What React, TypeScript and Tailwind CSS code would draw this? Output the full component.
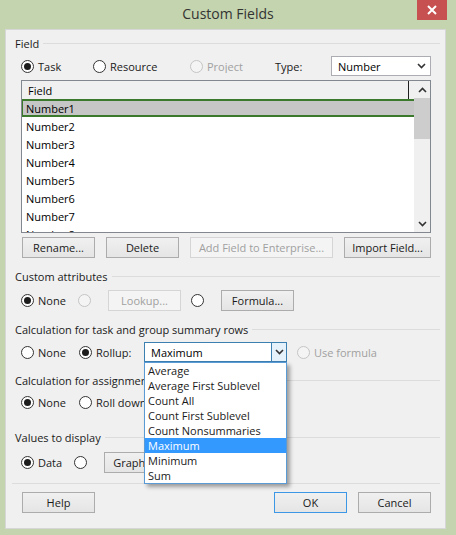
import React from 'react';

const FONT = "font-['Segoe_UI','Open_Sans',sans-serif]";

function Radio({ checked = false, disabled = false }: { checked?: boolean; disabled?: boolean }) {
  return (
    <span
      className={`flex h-[13px] w-[13px] shrink-0 items-center justify-center rounded-full border ${
        disabled ? 'border-[#c4c4c4] bg-[#f4f4f4]' : 'border-[#333333] bg-white'
      }`}
    >
      {checked && <span className="h-[7px] w-[7px] rounded-full bg-[#1c1c1c]" />}
    </span>
  );
}

function RadioLabel({ label, checked, disabled, width }: { label?: string; checked?: boolean; disabled?: boolean; width: string }) {
  return (
    <div className={`flex shrink-0 items-center gap-[4px] overflow-hidden whitespace-nowrap ${width}`}>
      <Radio checked={checked} disabled={disabled} />
      {label && <span className={disabled ? 'text-[#a0a0a0]' : 'text-[#1a1a1a]'}>{label}</span>}
    </div>
  );
}

function Btn({ label, width, disabled, primary }: { label: string; width: string; disabled?: boolean; primary?: boolean }) {
  return (
    <div
      className={`flex h-[21px] shrink-0 items-center justify-center overflow-hidden whitespace-nowrap border ${width} ${
        disabled
          ? 'border-[#d5d5d5] bg-[#f4f4f4] text-[#a0a0a0]'
          : primary
          ? 'border-[#3c97e6] bg-gradient-to-b from-[#f0f0f0] to-[#e5e5e5] text-[#1a1a1a]'
          : 'border-[#acacac] bg-gradient-to-b from-[#f0f0f0] to-[#e5e5e5] text-[#1a1a1a]'
      }`}
    >
      {label}
    </div>
  );
}

function Chevron({ className = '' }: { className?: string }) {
  return (
    <svg width="9" height="6" viewBox="0 0 9 6" className={className}>
      <polyline points="1,1 4.5,4.5 8,1" fill="none" stroke="#333" strokeWidth="1.6" />
    </svg>
  );
}

function GroupHeader({ title, mt }: { title: string; mt: string }) {
  return (
    <div className={`flex h-4 items-center gap-[4px] pl-[9px] pr-[5px] ${mt}`}>
      <span className="text-[#1a1a1a]">{title}</span>
      <div className="h-px flex-1 bg-[#dcdcdc]" />
    </div>
  );
}

const rollupOptions = [
  'Average',
  'Average First Sublevel',
  'Count All',
  'Count First Sublevel',
  'Count Nonsummaries',
  'Maximum',
  'Minimum',
  'Sum',
];

export default function App() {
  const rows = ['Number1', 'Number2', 'Number3', 'Number4', 'Number5', 'Number6', 'Number7', 'Number8'];

  return (
    <div className={`h-[535px] w-[456px] overflow-hidden bg-[#c4d4ae] text-[11px] leading-none ${FONT}`}>
      {/* Title bar */}
      <div className="grid h-[29px] grid-cols-[1fr_auto_1fr]">
        <div />
        <div className="flex items-center pb-[1px] text-[14px] text-[#333333]">Custom Fields</div>
        <div className="flex justify-end pr-[9px]">
          <div className="flex h-[20px] w-[30px] items-center justify-center bg-[#c75050]">
            <svg width="10" height="10" viewBox="0 0 10 10">
              <path d="M1 1 L9 9 M9 1 L1 9" stroke="#fff" strokeWidth="2" />
            </svg>
          </div>
        </div>
      </div>

      {/* Dialog body */}
      <div className="mx-[5px] flex h-[500px] w-[441px] flex-col border border-[#d6d6d6] bg-[#f0f0f0]">
        <GroupHeader title="Field" mt="mt-[5px]" />

        <div className="mt-[5px] flex h-[20px] items-center pl-[15px]">
          <RadioLabel label="Task" checked width="w-[72px]" />
          <RadioLabel label="Resource" width="w-[97px]" />
          <RadioLabel label="Project" disabled width="w-[85px]" />
          <span className="w-[56px] text-[#1a1a1a]">Type:</span>
          <div className="flex h-[20px] w-[100px] items-center justify-between border border-[#abadb3] bg-white pl-[6px] pr-[4px]">
            <span>Number</span>
            <Chevron />
          </div>
        </div>

        {/* Field list */}
        <div className="ml-[15px] mt-[4px] flex h-[153px] w-[410px] border border-[#828790] bg-white">
          <div className="flex w-[392px] flex-col overflow-hidden">
            <div className="flex h-[18px] shrink-0 bg-[#f0f0f0]">
              <div className="flex w-[387px] items-center border-r border-[#1e1e1e] pl-[6px]">Field</div>
            </div>
            <div className="flex h-[18px] shrink-0 items-center border-y-2 border-l border-[#3b7a2c] bg-[#c6c6c6] pl-[3px]">
              Number1
            </div>
            {rows.slice(1).map((r) => (
              <div key={r} className="flex h-[18px] shrink-0 items-center pl-[4px]">
                {r}
              </div>
            ))}
          </div>
          <div className="flex w-[16px] flex-col bg-[#f0f0f0]">
            <div className="flex h-[17px] items-center justify-center">
              <Chevron className="rotate-180" />
            </div>
            <div className="h-[41px] bg-[#cdcdcd]" />
            <div className="flex-1" />
            <div className="flex h-[17px] items-center justify-center">
              <Chevron />
            </div>
          </div>
        </div>

        <div className="mt-[4px] flex gap-[11px] pl-[16px]">
          <Btn label="Rename..." width="w-[73px]" />
          <Btn label="Delete" width="w-[73px]" />
          <Btn label="Add Field to Enterprise..." width="w-[143px]" disabled />
          <Btn label="Import Field..." width="w-[87px]" />
        </div>

        <GroupHeader title="Custom attributes" mt="mt-[10px]" />
        <div className="mt-[6px] flex h-[21px] items-center pl-[15px]">
          <RadioLabel label="None" checked width="w-[57px]" />
          <RadioLabel disabled width="w-[30px]" />
          <Btn label="Lookup..." width="w-[73px]" disabled />
          <div className="w-[10px]" />
          <RadioLabel width="w-[30px]" />
          <Btn label="Formula..." width="w-[73px]" />
        </div>

        <GroupHeader title="Calculation for task and group summary rows" mt="mt-[10px]" />
        <div className="mt-[5px] flex h-[20px] items-center pl-[15px]">
          <RadioLabel label="None" width="w-[58px]" />
          <RadioLabel label="Rollup:" checked width="w-[65px]" />
          <div className="relative">
            <div className="flex h-[20px] w-[143px] border border-[#3c7fb1] bg-white">
              <div className="flex flex-1 items-center pl-[6px]">Maximum</div>
              <div className="flex w-[15px] items-center justify-center border-l border-[#3c7fb1] bg-[#e5f1fb]">
                <Chevron />
              </div>
            </div>
            <div className="absolute left-0 top-[20px] z-10 w-[143px] border border-[#5b9bd5] bg-white shadow-[3px_3px_4px_rgba(0,0,0,0.35)]">
              {rollupOptions.map((o) => (
                <div
                  key={o}
                  className={`flex h-[15px] items-center whitespace-nowrap pl-[3px] ${
                    o === 'Maximum' ? 'bg-[#3399ff] text-white' : 'text-[#1a1a1a]'
                  }`}
                >
                  {o}
                </div>
              ))}
            </div>
          </div>
          <div className="w-[10px]" />
          <RadioLabel label="Use formula" disabled width="w-[90px]" />
        </div>

        <GroupHeader title="Calculation for assignment rows" mt="mt-[10px]" />
        <div className="mt-[4px] flex h-[20px] items-center pl-[15px]">
          <RadioLabel label="None" checked width="w-[58px]" />
          <RadioLabel label="Roll down unless manually entered" width="w-[190px]" />
        </div>

        <GroupHeader title="Values to display" mt="mt-[17px]" />
        <div className="mt-[7px] flex h-[21px] items-center pl-[15px]">
          <RadioLabel label="Data" checked width="w-[53px]" />
          <RadioLabel width="w-[30px]" />
          <Btn label="Graphical Indicators..." width="w-[130px]" />
        </div>

        <div className="ml-[6px] mr-[5px] mt-[10px] h-px bg-[#dcdcdc]" />

        <div className="mt-[8px] flex pl-[16px]">
          <Btn label="Help" width="w-[73px]" />
          <div className="flex-1" />
          <Btn label="OK" width="w-[73px]" primary />
          <div className="w-[11px]" />
          <Btn label="Cancel" width="w-[73px]" />
          <div className="w-[14px]" />
        </div>
      </div>
    </div>
  );
}
